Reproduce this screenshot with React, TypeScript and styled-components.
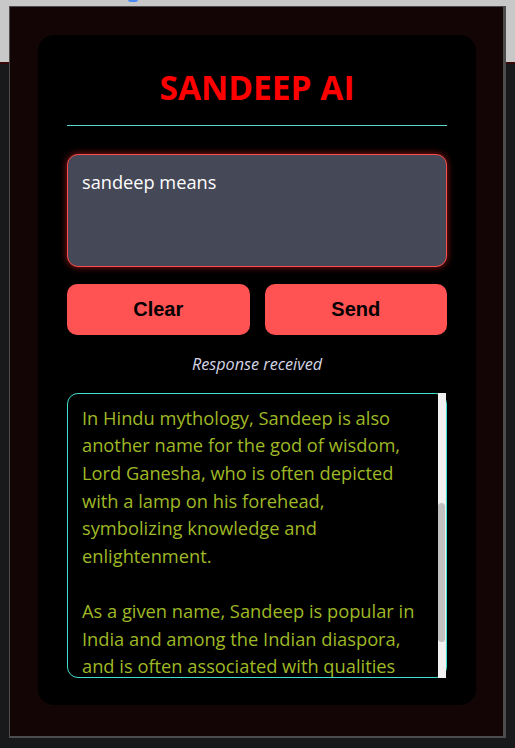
import { useEffect, useRef, useState } from "react";
import styled, { createGlobalStyle } from "styled-components";

const INTRO = `Sandeep is a common Indian given name
of Sanskrit origin. It is derived from the
word "Sandeepa", which means "lamp"
or "lighted lamp". The name represents
light, knowledge and wisdom, and is
given with the hope that the child will
spread light wherever they go.

`;

const REST = `In Hindu mythology, Sandeep is also
another name for the god of wisdom,
Lord Ganesha, who is often depicted
with a lamp on his forehead,
symbolizing knowledge and
enlightenment.

As a given name, Sandeep is popular in
India and among the Indian diaspora,
and is often associated with qualities
such as intelligence, kindness and a
bright personality.`;

export default function App() {
  const boxRef = useRef<HTMLDivElement>(null);
  const markRef = useRef<HTMLSpanElement>(null);
  const [thumb, setThumb] = useState({ top: 0, height: 0 });

  const measure = () => {
    const box = boxRef.current;
    if (!box) return;
    const h = box.clientHeight;
    setThumb({
      top: (box.scrollTop / box.scrollHeight) * h,
      height: (h / box.scrollHeight) * h,
    });
  };

  useEffect(() => {
    // the reply is shown scrolled down to its second paragraph
    const box = boxRef.current;
    const mark = markRef.current;
    if (box && mark) box.scrollTop = mark.offsetTop - 11;
    measure();
  }, []);

  return (
    <>
      <GlobalStyle />
      <Page>
        <BrowserBar>
          <TabMark />
        </BrowserBar>
        <PageBody />
      </Page>
      <Popup>
        <Card>
          <Title>SANDEEP AI</Title>
          <Rule />
          <Prompt defaultValue="sandeep means" />
          <Actions>
            <ActionButton>Clear</ActionButton>
            <ActionButton>Send</ActionButton>
          </Actions>
          <Status>Response received</Status>
          <ResponseFrame>
            <ResponseText ref={boxRef} onScroll={measure}>
              {INTRO}
              <span ref={markRef}>{REST}</span>
            </ResponseText>
            <Track>
              <Thumb style={{ top: thumb.top, height: thumb.height }} />
            </Track>
          </ResponseFrame>
        </Card>
      </Popup>
    </>
  );
}

const GlobalStyle = createGlobalStyle`
  html, body {
    margin: 0;
    padding: 0;
    background: #17191b;
    overflow: hidden;
  }
  body {
    font-family: "Open Sans", "Noto Sans", sans-serif;
  }
`;

const Page = styled.div`
  height: 748px;
  display: flex;
  flex-direction: column;
`;

const BrowserBar = styled.div`
  height: 62px;
  background: #c8c8c8;
  border-bottom: 2px solid #3a0808;
  position: relative;
`;

const TabMark = styled.div`
  position: absolute;
  left: 128px;
  top: -3px;
  width: 10px;
  height: 5px;
  border-radius: 4px;
  background: #4a8af4;
`;

const PageBody = styled.div`
  flex: 1;
  background: #17191b;
`;

const Popup = styled.div`
  position: absolute;
  left: 9px;
  top: 6px;
  width: 497px;
  height: 732px;
  box-sizing: border-box;
  background: #130505;
  border: 1px solid #4c4c4c;
  border-right-width: 3px;
  border-bottom-width: 2px;
  padding: 28px 27px 31px 28px;
  display: flex;
`;

const Card = styled.div`
  flex: 1;
  background: #000;
  border-radius: 16px;
  padding: 0 29px;
  display: flex;
  flex-direction: column;
`;

const Title = styled.h1`
  margin: 31px 0 0;
  text-align: center;
  color: #ff0000;
  font-family: "Open Sans", sans-serif;
  font-weight: 700;
  font-size: 33.5px;
  line-height: 43px;
`;

const Rule = styled.div`
  margin-top: 16px;
  height: 1px;
  background: #5ad8cf;
`;

const Prompt = styled.textarea`
  margin-top: 28px;
  height: 113px;
  box-sizing: border-box;
  resize: none;
  background: #454857;
  color: #fff;
  border: 1.5px solid #ff4b4b;
  border-radius: 11px;
  box-shadow: 0 0 7px rgba(255, 40, 40, 0.6);
  padding: 15px 14px;
  font-family: "Open Sans", sans-serif;
  font-size: 18.2px;
  line-height: 24px;
  outline: none;
`;

const Actions = styled.div`
  margin-top: 17px;
  display: grid;
  grid-template-columns: 1fr 1fr;
  gap: 15px;
`;

const ActionButton = styled.button`
  height: 51px;
  border: none;
  border-radius: 10px;
  background: #ff5252;
  color: #000;
  font-family: "Liberation Sans", Arial, sans-serif;
  font-weight: 700;
  font-size: 20px;
  cursor: pointer;
`;

const Status = styled.div`
  margin-top: 17px;
  text-align: center;
  color: #d4d5e6;
  font-style: italic;
  font-size: 16.2px;
  line-height: 24px;
`;

const ResponseFrame = styled.div`
  position: relative;
  margin-top: 17px;
  height: 285px;
  box-sizing: border-box;
  border: 1px solid #40e0d0;
  border-radius: 11px;
`;

const ResponseText = styled.div`
  height: 100%;
  box-sizing: border-box;
  overflow-y: scroll;
  scrollbar-width: none;
  padding: 12px 8px 12px 14px;
  color: #9fb826;
  font-size: 18.3px;
  line-height: 27.6px;
  white-space: pre-wrap;

  &::-webkit-scrollbar {
    display: none;
  }
`;

const Track = styled.div`
  position: absolute;
  top: -1px;
  bottom: -1px;
  right: 0;
  width: 8px;
  background: #f1f1f1;
`;

const Thumb = styled.div`
  position: absolute;
  left: 0;
  width: 7px;
  border-radius: 4px;
  background: #c1c1c1;
`;
